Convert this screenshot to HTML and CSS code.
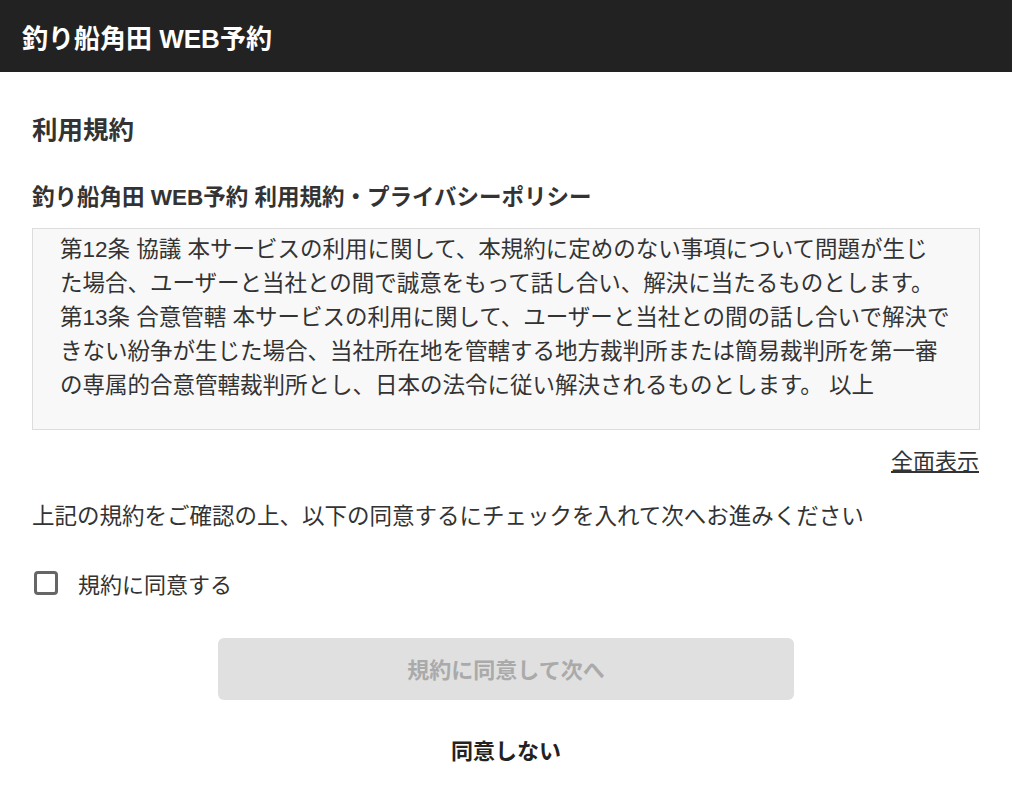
FILE: index.html
```html
<!DOCTYPE html>
<html lang="ja">
<head>
    <meta charset="UTF-8">
    <meta name="viewport" content="width=device-width, initial-scale=1.0">
    <title>釣り船角田 WEB予約 利用規約</title>
    <link rel="stylesheet" href="styles.css">
</head>
<body>
    <header class="site-header">
        <div class="site-title">釣り船角田 WEB予約</div>
    </header>

    <main class="container">
        <h2 class="page-title">利用規約</h2>
        <h3 class="terms-title">釣り船角田 WEB予約 利用規約・プライバシーポリシー</h3>

        <div class="terms-box">
            <p>第12条 協議 本サービスの利用に関して、本規約に定めのない事項について問題が生じ<br>た場合、ユーザーと当社との間で誠意をもって話し合い、解決に当たるものとします。</p>
            <p>第13条 合意管轄 本サービスの利用に関して、ユーザーと当社との間の話し合いで解決できない紛争が生じた場合、当社所在地を管轄する地方裁判所または簡易裁判所を第一審の専属的合意管轄裁判所とし、日本の法令に従い解決されるものとします。 以上</p>
        </div>

        <div class="show-all">
            <a href="#">全面表示</a>
        </div>

        <p class="notice">上記の規約をご確認の上、以下の同意するにチェックを入れて次へお進みください</p>

        <label class="agree-check">
            <input type="checkbox">
            <span class="check-box"></span>
            <span>規約に同意する</span>
        </label>

        <button class="btn-next" disabled>規約に同意して次へ</button>

        <div class="decline">
            <a href="#">同意しない</a>
        </div>
    </main>
</body>
</html>
```

FILE: styles.css
```css
body {
    font-family: "Liberation Sans", "Noto Sans CJK JP", sans-serif;
    margin: 0;
    background: #fff;
    color: #333;
}
.site-header {
    background: #222;
    height: 72px;
    display: flex;
    align-items: center;
    padding: 0 22px;
}
.site-title {
    color: #fff;
    font-size: 26px;
    font-weight: bold;
}
.container {
    padding: 41px 32px 0;
}
.page-title {
    margin: 0 0 34px;
    font-size: 25.5px;
    line-height: 34px;
    font-weight: bold;
    color: #333;
}
.terms-title {
    margin: 0 0 13px;
    font-size: 22.5px;
    line-height: 34px;
    font-weight: bold;
    color: #333;
}
.terms-box {
    box-sizing: border-box;
    height: 202px;
    overflow: hidden;
    background: #f8f8f8;
    border: 1px solid #ddd;
    padding: 4px 26px 0 27px;
    font-size: 22.5px;
    line-height: 34px;
    color: #333;
}
.terms-box p {
    margin: 0;
}
.show-all {
    margin-top: 15px;
    text-align: right;
    font-size: 22px;
    line-height: 34px;
    padding-right: 1px;
}
.show-all a {
    color: #333;
    text-decoration: underline;
}
.notice {
    margin: 21px 0 0;
    font-size: 22.5px;
    line-height: 34px;
    color: #333;
}
.agree-check {
    margin-top: 32px;
    display: flex;
    align-items: center;
    gap: 20px;
    height: 34px;
    padding-left: 2px;
    font-size: 22px;
    color: #333;
    cursor: pointer;
}
.agree-check input {
    display: none;
}
.check-box {
    box-sizing: border-box;
    width: 24px;
    height: 24px;
    border: 3px solid #666;
    border-radius: 4px;
    background: #fff;
}
.btn-next {
    display: block;
    width: 576px;
    height: 62px;
    margin: 38px auto 0;
    padding-bottom: 4px;
    border: none;
    border-radius: 6px;
    background: #e0e0e0;
    color: #aaa;
    font-family: inherit;
    font-size: 22px;
    font-weight: bold;
}
.decline {
    margin-top: 35px;
    text-align: center;
    font-size: 22px;
    line-height: 34px;
}
.decline a {
    color: #222;
    font-weight: bold;
    text-decoration: none;
}
```
